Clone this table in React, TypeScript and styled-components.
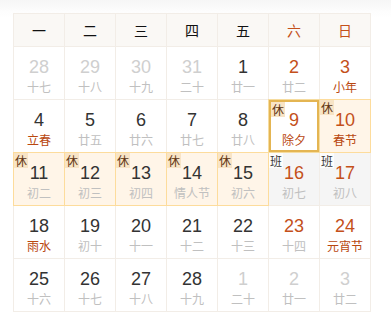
import React from "react";
import styled, { createGlobalStyle } from "styled-components";

const Global = createGlobalStyle`
  html, body { margin: 0; padding: 0; background: #fff; }
  body { font-family: "Liberation Sans", "Noto Sans CJK SC", sans-serif; }
`;

const Page = styled.div`
  width: 391px;
  height: 319px;
  box-sizing: border-box;
  padding: 13px 0 0 13px;
  background: linear-gradient(to bottom, #f6f6f6 0px, #fdfdfd 12px, #fff 18px);
`;

const Grid = styled.div`
  display: grid;
  grid-template-columns: repeat(7, 50px);
  grid-template-rows: 32px repeat(5, 52px);
  gap: 1px;
  width: max-content;
  background: #f2ede7;
  border: 1px solid #f2ede7;
`;

const Head = styled.div<{ $weekend?: boolean }>`
  background: #faf8f5;
  display: flex;
  align-items: center;
  justify-content: center;
  font-family: "Noto Sans CJK SC", sans-serif;
  font-size: 14px;
  color: ${(p) => (p.$weekend ? "#c4501a" : "#111")};
`;

type Kind = "normal" | "rest" | "work" | "selected";

const Cell = styled.div<{ $kind: Kind }>`
  position: relative;
  display: flex;
  flex-direction: column;
  align-items: center;
  padding-top: 9px;
  box-sizing: border-box;
  background: ${(p) =>
    p.$kind === "rest" ? "#fff5e8" : p.$kind === "work" ? "#f5f5f5" : "#fff"};
  ${(p) =>
    p.$kind === "rest"
      ? "box-shadow: 0 0 0 1px #fddc9c; z-index: 1;"
      : p.$kind === "selected"
      ? "box-shadow: 0 0 0 1px #f6dc9e, inset 0 0 0 2px #e4b552; z-index: 2;"
      : ""}
`;

const Num = styled.div<{ $tone: string }>`
  font-family: "Liberation Sans", Arial, sans-serif;
  font-size: 18px;
  line-height: 22px;
  color: ${(p) => p.$tone};
`;

const Lunar = styled.div<{ $red?: boolean }>`
  font-family: "Noto Sans CJK SC", sans-serif;
  font-size: 12px;
  line-height: 16px;
  margin-top: 1px;
  color: ${(p) => (p.$red ? "#b9470f" : "#c0c0c0")};
`;

const Badge = styled.span<{ $work?: boolean; $inset?: boolean }>`
  position: absolute;
  top: ${(p) => (p.$inset ? "2px" : "0")};
  left: ${(p) => (p.$inset ? "2px" : "0")};
  width: 14px;
  height: 15px;
  display: flex;
  align-items: center;
  justify-content: center;
  font-family: "Noto Sans CJK SC", sans-serif;
  font-size: 12px;
  line-height: 1;
  color: ${(p) => (p.$work ? "#3a3a3a" : "#5e3410")};
  background: ${(p) => (p.$work ? "#fdfdfd" : "#f8e4c6")};
`;

type Day = {
  n: number;
  l: string;
  tone: "dark" | "red" | "gray";
  lred?: boolean;
  kind?: Kind;
  badge?: "休" | "班";
};

const D = "dark", R = "red", G = "gray";

const days: Day[] = [
  { n: 28, l: "十七", tone: G }, { n: 29, l: "十八", tone: G }, { n: 30, l: "十九", tone: G },
  { n: 31, l: "二十", tone: G }, { n: 1, l: "廿一", tone: D }, { n: 2, l: "廿二", tone: R },
  { n: 3, l: "小年", tone: R, lred: true },

  { n: 4, l: "立春", tone: D, lred: true }, { n: 5, l: "廿五", tone: D }, { n: 6, l: "廿六", tone: D },
  { n: 7, l: "廿七", tone: D }, { n: 8, l: "廿八", tone: D },
  { n: 9, l: "除夕", tone: R, lred: true, kind: "selected", badge: "休" },
  { n: 10, l: "春节", tone: R, lred: true, kind: "rest", badge: "休" },

  { n: 11, l: "初二", tone: D, kind: "rest", badge: "休" },
  { n: 12, l: "初三", tone: D, kind: "rest", badge: "休" },
  { n: 13, l: "初四", tone: D, kind: "rest", badge: "休" },
  { n: 14, l: "情人节", tone: D, kind: "rest", badge: "休" },
  { n: 15, l: "初六", tone: D, kind: "rest", badge: "休" },
  { n: 16, l: "初七", tone: R, kind: "work", badge: "班" },
  { n: 17, l: "初八", tone: R, kind: "work", badge: "班" },

  { n: 18, l: "雨水", tone: D, lred: true }, { n: 19, l: "初十", tone: D }, { n: 20, l: "十一", tone: D },
  { n: 21, l: "十二", tone: D }, { n: 22, l: "十三", tone: D }, { n: 23, l: "十四", tone: R },
  { n: 24, l: "元宵节", tone: R, lred: true },

  { n: 25, l: "十六", tone: D }, { n: 26, l: "十七", tone: D }, { n: 27, l: "十八", tone: D },
  { n: 28, l: "十九", tone: D }, { n: 1, l: "二十", tone: G }, { n: 2, l: "廿一", tone: G },
  { n: 3, l: "廿二", tone: G },
];

const toneColor = { dark: "#333", red: "#c4501a", gray: "#cfcfcf" };

const heads = ["一", "二", "三", "四", "五", "六", "日"];

export default function App() {
  return (
    <>
      <Global />
      <Page>
        <Grid>
          {heads.map((h, i) => (
            <Head key={h} $weekend={i >= 5}>{h}</Head>
          ))}
          {days.map((d, i) => (
            <Cell key={i} $kind={d.kind ?? "normal"}>
              {d.badge && (
                <Badge $work={d.badge === "班"} $inset={d.kind === "selected"}>
                  {d.badge}
                </Badge>
              )}
              <Num $tone={toneColor[d.tone]}>{d.n}</Num>
              <Lunar $red={d.lred}>{d.l}</Lunar>
            </Cell>
          ))}
        </Grid>
      </Page>
    </>
  );
}
